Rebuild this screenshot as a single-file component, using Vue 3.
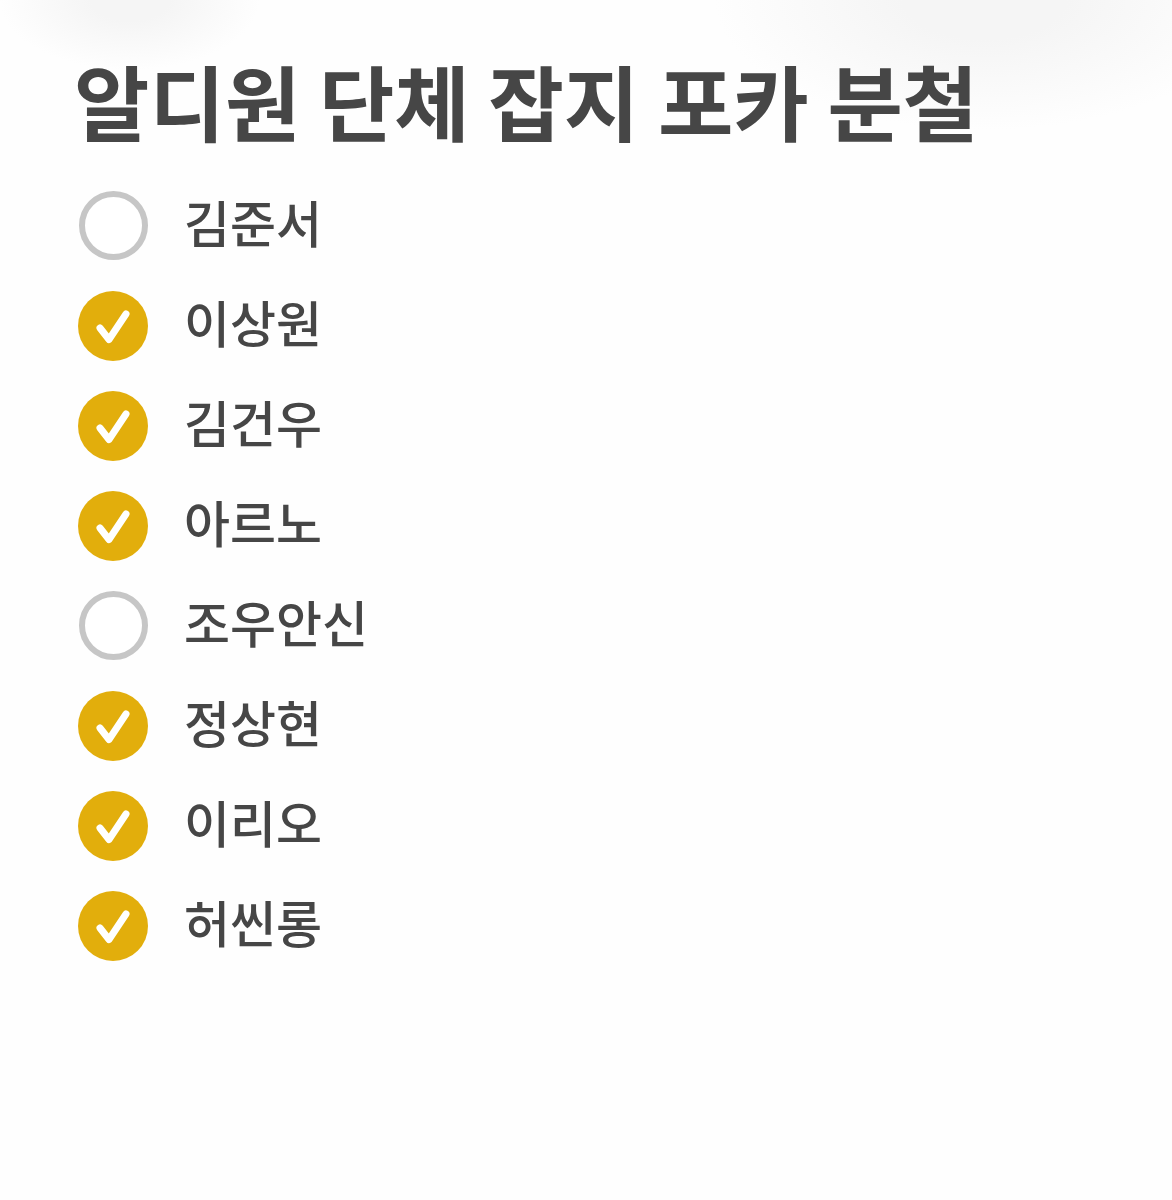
<script setup>
import { ref } from 'vue'

const items = ref([
  { name: '김준서', done: false },
  { name: '이상원', done: true },
  { name: '김건우', done: true },
  { name: '아르노', done: true },
  { name: '조우안신', done: false },
  { name: '정상현', done: true },
  { name: '이리오', done: true },
  { name: '허씬롱', done: true },
])
</script>

<template>
  <main class="note">
    <h1 class="title">알디원 단체 잡지 포카 분철</h1>
    <ul class="list">
      <li v-for="item in items" :key="item.name">
        <label class="row">
          <input v-model="item.done" class="box" type="checkbox" />
          <svg class="mark" viewBox="0 0 72 72" aria-hidden="true">
            <template v-if="item.done">
              <circle cx="36" cy="36" r="35" fill="#e2ae0c" />
              <path d="M23 38 L32 49.500 L49 24" fill="none" stroke="#fff" stroke-width="7" stroke-linecap="round" stroke-linejoin="round" />
            </template>
            <circle v-else cx="36.500" cy="35.500" r="31.500" fill="#fff" stroke="#c6c6c6" stroke-width="6" />
          </svg>
          <span class="name">{{ item.name }}</span>
        </label>
      </li>
    </ul>
  </main>
</template>

<style>
body {
  margin: 0;
  background: #fefefe;
}
</style>

<style scoped>
.note {
  box-sizing: border-box;
  min-height: 100vh;
  padding: 44px 74px;
  color: #464646;
  font-family: "Noto Sans CJK KR", sans-serif;
  background:
    radial-gradient(ellipse 130px 70px at 130px 0, #f5f5f5 30%, transparent),
    radial-gradient(ellipse 270px 130px at 84% 0, #f5f5f5 30%, transparent),
    #fefefe;
}

.title {
  margin: 0;
  font-size: 82px;
  line-height: 112px;
  font-weight: 700;
}

.list {
  margin: 20px 0 0;
  padding: 0 3px;
  list-style: none;
}

.row {
  position: relative;
  display: flex;
  align-items: center;
  gap: 35px;
  height: 100px;
  cursor: pointer;
}

.box {
  position: absolute;
  width: 72px;
  height: 72px;
  margin: 0;
  opacity: 0;
  cursor: pointer;
}

.mark {
  width: 72px;
  height: 72px;
}

.name {
  padding-bottom: 10px;
  font-size: 50px;
  line-height: 72px;
  font-weight: 500;
}
</style>
